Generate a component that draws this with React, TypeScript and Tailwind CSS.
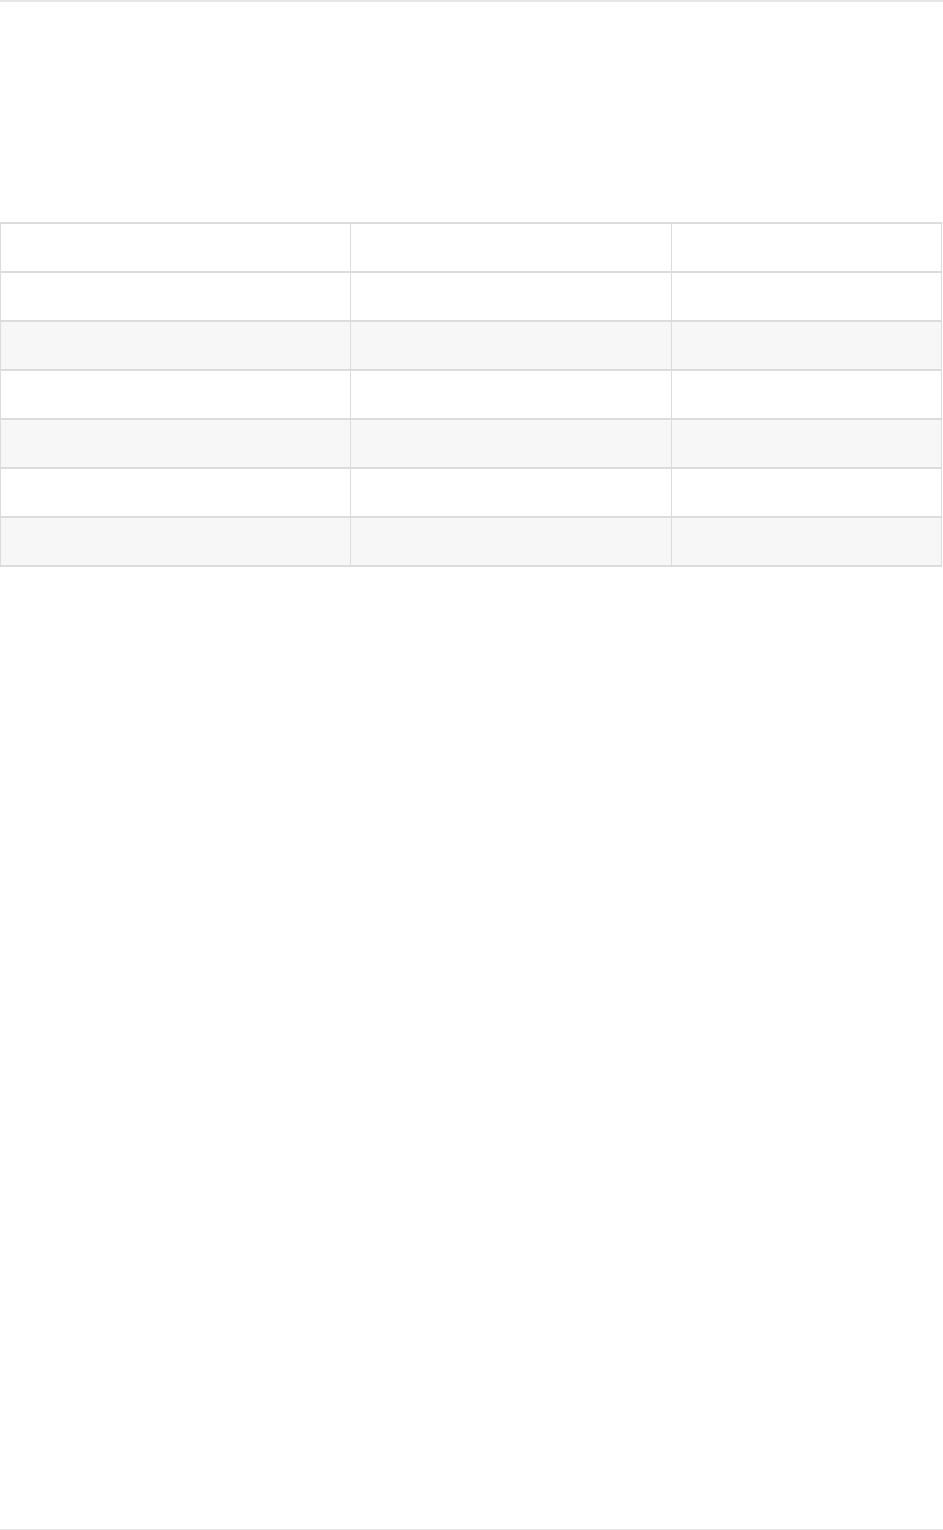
const rows = [0, 1, 2, 3, 4, 5];

export default function App() {
  return (
    <div className="h-[1530px] bg-white border-t-2 border-b border-[#e6e6e6] font-['Liberation_Sans',sans-serif] text-sm text-[#333]">
      <div className="pt-[220px]">
        <table className="w-[942px] table-fixed border-separate border-spacing-0">
          <colgroup>
            <col className="w-[351px]" />
            <col className="w-[321px]" />
            <col className="w-[270px]" />
          </colgroup>
          <thead>
            <tr>
              <th className="h-[51px] border-y-2 border-l border-r border-[#dcdcdc] bg-white"></th>
              <th className="h-[51px] border-y-2 border-r border-[#dcdcdc] bg-white"></th>
              <th className="h-[51px] border-y-2 border-r border-[#dcdcdc] bg-white"></th>
            </tr>
          </thead>
          <tbody>
            {rows.map((r) => (
              <tr key={r} className={r % 2 === 1 ? 'bg-[#f7f7f7]' : 'bg-white'}>
                <td className="h-[49px] border-b-2 border-l border-r border-[#dcdcdc]"></td>
                <td className="h-[49px] border-b-2 border-r border-[#dcdcdc]"></td>
                <td className="h-[49px] border-b-2 border-r border-[#dcdcdc]"></td>
              </tr>
            ))}
          </tbody>
        </table>
      </div>
    </div>
  );
}
